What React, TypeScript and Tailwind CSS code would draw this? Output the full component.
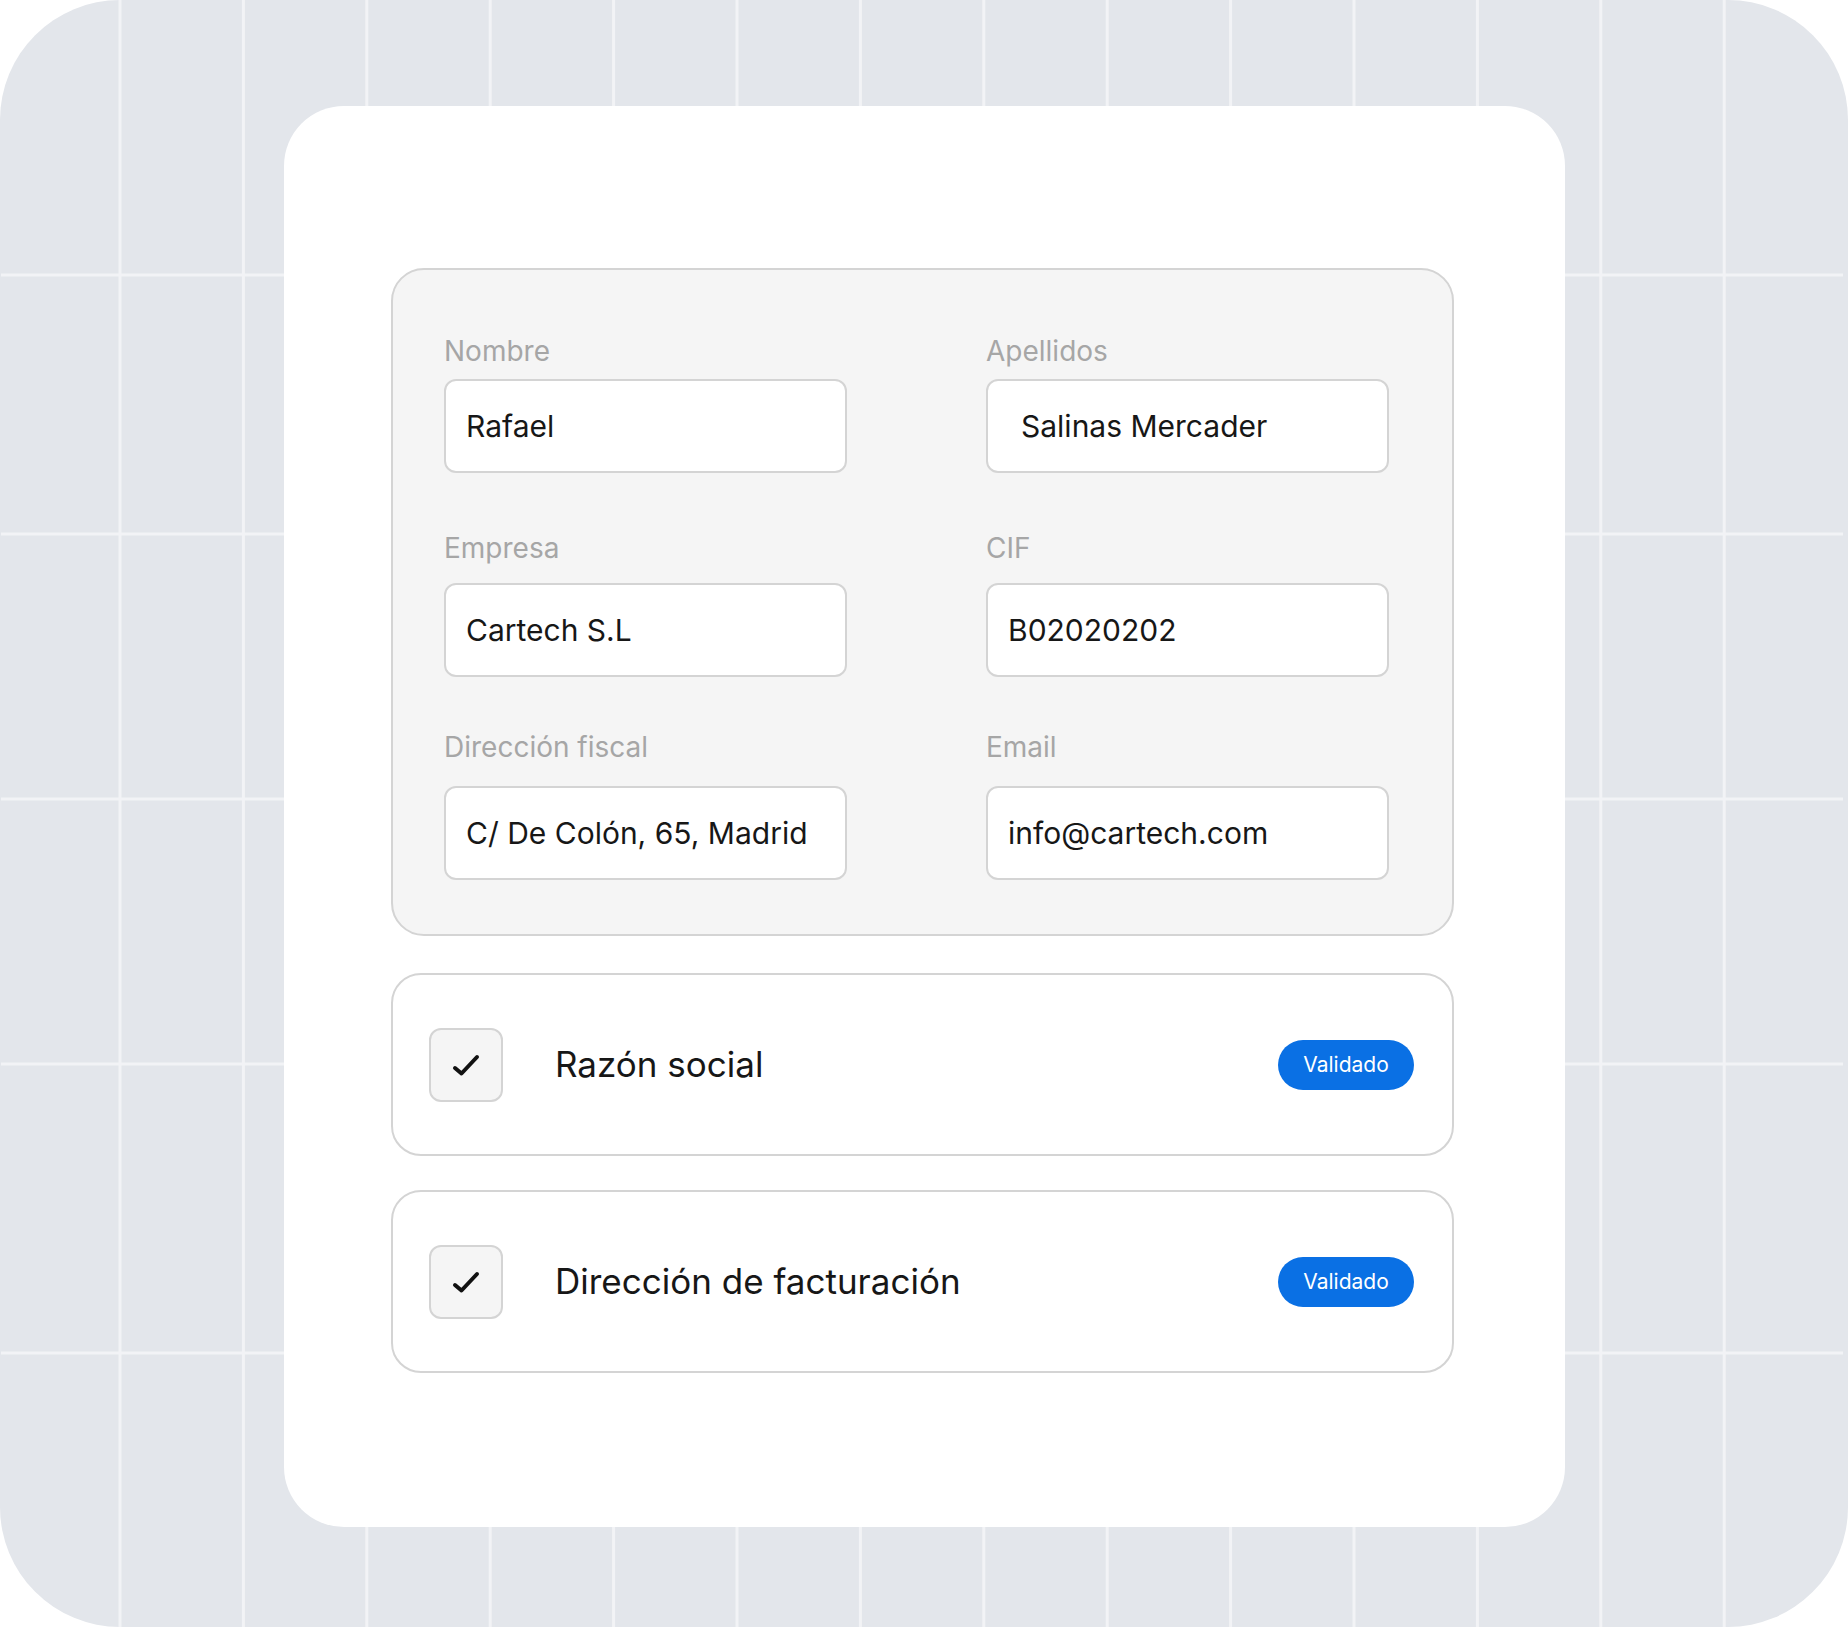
import React from "react";

type Field = { label: string; value: string; pad?: string };

// form rows, left and right column
const rows: { gap: string; top: string; fields: Field[] }[] = [
  {
    gap: "mb-[13px]",
    top: "mt-0",
    fields: [
      { label: "Nombre", value: "Rafael" },
      { label: "Apellidos", value: "Salinas Mercader", pad: "pl-[33px]" },
    ],
  },
  {
    gap: "mb-[20px]",
    top: "mt-[60px]",
    fields: [
      { label: "Empresa", value: "Cartech S.L" },
      { label: "CIF", value: "B02020202" },
    ],
  },
  {
    gap: "mb-[24px]",
    top: "mt-[55px]",
    fields: [
      { label: "Dirección fiscal", value: "C/ De Colón, 65, Madrid" },
      { label: "Email", value: "info@cartech.com" },
    ],
  },
];

const vLines = Array.from({ length: 14 }, (_, i) => 120 + i * 123.4);
const hLines = [275, 534, 799, 1064, 1353];

function GridLines() {
  return (
    <svg className="absolute inset-0 pointer-events-none" width="1848" height="1627" viewBox="0 0 1848 1627">
      {vLines.map((x) => (
        <rect key={x} x={x - 1.5} y={0} width={3} height={1627} fill="#f2f3f6" />
      ))}
      {hLines.map((y) => (
        <rect key={y} x={1} y={y - 1.5} width={1842} height={3} fill="#f2f3f6" />
      ))}
    </svg>
  );
}

function CheckMark() {
  return (
    <svg width="32" height="24" viewBox="0 0 32 24" fill="none">
      <path d="M5 15 L11.5 20.5 L27 4" stroke="#111" strokeWidth="4" strokeLinecap="round" strokeLinejoin="round" />
    </svg>
  );
}

function CheckRow({ title, className }: { title: string; className: string }) {
  return (
    <div className={`${className} h-[183px] border-2 border-[#d4d4d4] rounded-[30px] bg-white flex items-center pl-[36px] pr-[38px]`}>
      <div className="w-[74px] h-[74px] rounded-[12px] border-2 border-[#d4d4d4] bg-[#f5f5f5] flex items-center justify-center shrink-0">
        <CheckMark />
      </div>
      <span className="ml-[52px] text-[35px] text-[#171717] leading-none">{title}</span>
      <span className="ml-auto w-[136px] h-[50px] rounded-full bg-[#0a70e4] text-white text-[21px] flex items-center justify-center">
        Validado
      </span>
    </div>
  );
}

export default function App() {
  return (
    <div className="w-[1848px] h-[1627px] bg-white font-['Inter',sans-serif]">
      <div className="relative w-full h-full rounded-[120px] bg-[#e3e6eb] overflow-hidden pl-[284px] pt-[106px]">
        <GridLines />

        {/* white sheet */}
        <div className="relative w-[1281px] h-[1421px] bg-white rounded-[60px] pt-[162px] pl-[107px]">
          {/* datos fiscales */}
          <div className="w-[1063px] border-2 border-[#d4d4d4] rounded-[33px] bg-[#f5f5f5] pt-[66px] pb-[54px] pl-[51px]">
            {rows.map((row) => (
              <div key={row.fields[0].label} className={`${row.top} grid grid-cols-[403px_403px] gap-x-[139px]`}>
                {row.fields.map((f) => (
                  <div key={f.label}>
                    <div className={`${row.gap} text-[28px] leading-[30px] text-[#a6a6a6]`}>{f.label}</div>
                    <div
                      className={`h-[94px] border-2 border-[#d4d4d4] rounded-[12px] bg-white flex items-center ${f.pad ?? "pl-[20px]"} text-[30px] text-[#171717]`}
                    >
                      {f.value}
                    </div>
                  </div>
                ))}
              </div>
            ))}
          </div>

          <CheckRow title="Razón social" className="w-[1063px] mt-[37px]" />
          <CheckRow title="Dirección de facturación" className="w-[1063px] mt-[34px]" />
        </div>
      </div>
    </div>
  );
}
